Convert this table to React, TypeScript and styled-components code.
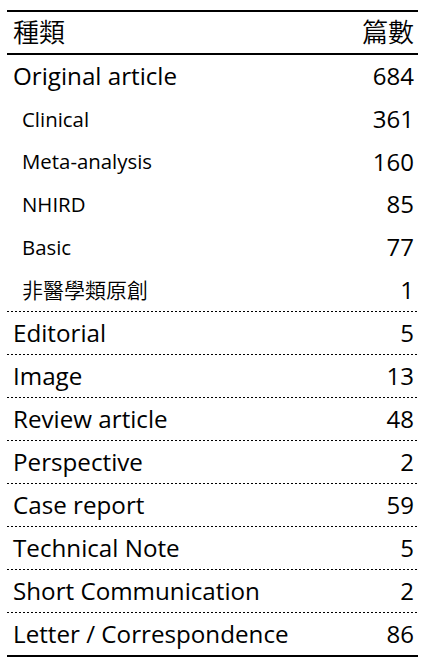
import React from "react";
import styled, { createGlobalStyle } from "styled-components";

const Global = createGlobalStyle`
  html, body { margin: 0; padding: 0; background: #fff; }
  body {
    font-family: "Open Sans", "Noto Sans", "Noto Sans CJK TC", sans-serif;
    color: #000;
  }
`;

const Page = styled.div`
  padding: 10px 11px 0 7px;
`;

const Table = styled.div`
  width: 411px;
  border-top: 2px solid #000;
  border-bottom: 2px solid #000;
  display: flex;
  flex-direction: column;
`;

const HeaderRow = styled.div`
  height: 41px;
  box-sizing: border-box;
  border-bottom: 2px solid #000;
  display: flex;
  align-items: center;
  justify-content: space-between;
  padding: 0 4px 4px 6px;
  font-family: "Noto Sans CJK TC", sans-serif;
  font-size: 26px;
  font-weight: 350;
  line-height: 1;
  height: 43px;
`;

const Group = styled.div`
  height: 256px;
  display: flex;
  flex-direction: column;
`;

const Row = styled.div<{ $dotted?: boolean; $sub?: boolean }>`
  box-sizing: border-box;
  height: ${(p) => (p.$dotted ? "43px" : "auto")};
  flex: ${(p) => (p.$dotted ? "none" : "1")};
  display: flex;
  align-items: center;
  justify-content: space-between;
  padding: ${(p) => (p.$dotted ? "1px" : "0")} 4px 0
    ${(p) => (p.$sub ? "15px" : "6px")};
  background-image: ${(p) =>
    p.$dotted
      ? "repeating-linear-gradient(to right, #000 0 2px, transparent 2px 4px)"
      : "none"};
  background-size: 100% 1px;
  background-repeat: no-repeat;
  background-position: top left;
`;

const Label = styled.span<{ $sub?: boolean }>`
  font-size: ${(p) => (p.$sub ? "20.4px" : "24.2px")};
  line-height: 1;
  white-space: nowrap;
`;

const CjkLabel = styled(Label)`
  font-family: "Noto Sans CJK TC", sans-serif;
  font-size: 21px;
  font-weight: 350;
`;

const Count = styled.span`
  font-size: 24px;
  line-height: 1;
`;

const subs: [string, number][] = [
  ["Clinical", 361],
  ["Meta-analysis", 160],
  ["NHIRD", 85],
  ["Basic", 77],
];

const others: [string, number][] = [
  ["Editorial", 5],
  ["Image", 13],
  ["Review article", 48],
  ["Perspective", 2],
  ["Case report", 59],
  ["Technical Note", 5],
  ["Short Communication", 2],
  ["Letter / Correspondence", 86],
];

export default function App() {
  return (
    <>
      <Global />
      <Page>
        <Table>
          <HeaderRow>
            <span>種類</span>
            <span>篇數</span>
          </HeaderRow>
          <Group>
            <Row>
              <Label>Original article</Label>
              <Count>684</Count>
            </Row>
            {subs.map(([name, n]) => (
              <Row key={name} $sub>
                <Label $sub>{name}</Label>
                <Count>{n}</Count>
              </Row>
            ))}
            <Row $sub>
              <CjkLabel $sub>非醫學類原創</CjkLabel>
              <Count>1</Count>
            </Row>
          </Group>
          {others.map(([name, n]) => (
            <Row key={name} $dotted>
              <Label>{name}</Label>
              <Count>{n}</Count>
            </Row>
          ))}
        </Table>
      </Page>
    </>
  );
}
